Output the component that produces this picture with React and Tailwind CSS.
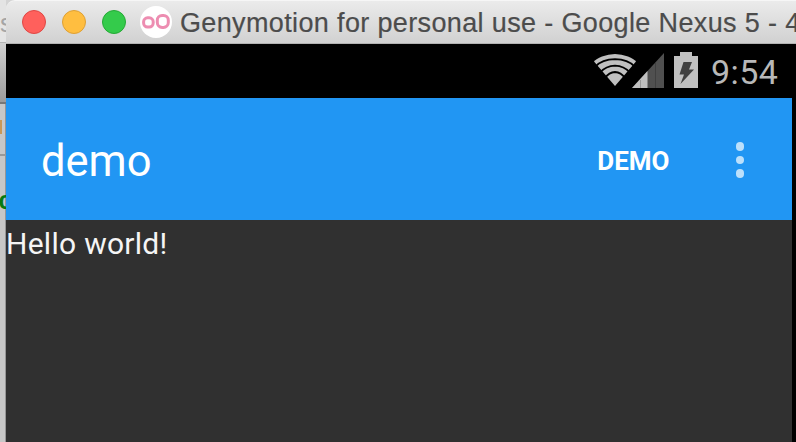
function BackgroundWindow() {
  return (
    <div className="flex w-[6px] shrink-0 flex-col overflow-hidden bg-[#c7c7c7] shadow-[inset_-1px_0_0_#969696]">
      <div className="h-[42px] shrink-0 bg-[#e4e4e4] pt-[10px] font-['Liberation_Sans',sans-serif] text-[26px] leading-[26px] text-[#a5a5a5]">
        <span className="block">s</span>
      </div>
      <div className="h-[60px] shrink-0 border-t border-[#b5b5b5] bg-linear-to-b from-[#d0d0d0] to-[#9b9b9b]" />
      <div className="h-[2px] shrink-0 bg-[#777777]" />
      <div className="h-[50px] shrink-0 pt-4">
        <div className="h-[14px] w-[2px] bg-[#c89858]" />
      </div>
      <div className="h-[2px] shrink-0 bg-[#999999]" />
      <div className="pt-[34px] font-['Liberation_Mono',monospace] text-[25px] leading-[26px] font-bold text-[#087a12]">
        <span className="-ml-[2px] block">c</span>
      </div>
    </div>
  );
}

function TitleBar() {
  return (
    <div className="flex h-[44px] shrink-0 items-center overflow-hidden rounded-tl-[9px] border-t border-b border-t-[#f6f6f6] border-b-[#b3b3b3] bg-linear-to-b from-[#ebebeb] to-[#d1d1d1] pl-4">
      <div className="flex shrink-0 gap-4">
        <div className="size-6 rounded-full border border-[#df4744] bg-[#ff605c]" />
        <div className="size-6 rounded-full border border-[#dea035] bg-[#ffbe40]" />
        <div className="size-6 rounded-full border border-[#25a936] bg-[#34cb4b]" />
      </div>
      <svg className="ml-[14px] size-8 shrink-0" viewBox="0 0 32 32" fill="none">
        <circle cx="16" cy="16" r="16" fill="#fff" />
        <rect x="3.6" y="11.8" width="9.6" height="9.3" rx="4" stroke="#ed8db1" strokeWidth="3" />
        <rect x="17.3" y="9.4" width="11" height="12" rx="4.8" stroke="#ed8db1" strokeWidth="3" />
      </svg>
      <span className="ml-[8px] pt-[2px] font-['Liberation_Sans',Arial,sans-serif] text-[27px] leading-[30px] tracking-[0.36px] whitespace-nowrap text-[#4c4c4c] [-webkit-text-stroke:0.2px_#4c4c4c]">
        Genymotion for personal use - Google Nexus 5 - 4
      </span>
    </div>
  );
}

function StatusBar() {
  return (
    <div className="flex h-[54px] shrink-0 bg-black pl-[588px]">
      <svg className="mt-[8px] h-[38px] w-[106px] shrink-0" viewBox="594 52 106 38">
        <path d="M594 61.5Q596 59 602 56.5Q615 51.5 628 56.5Q634 59 636 61.5L615 86Z" fill="#c0c0c0" />
        <g fill="none" stroke="#000" strokeWidth="1.8">
          <path d="M595.5 66.5Q602 59.5 615 59.2Q628 59.5 634.5 66.5" />
          <path d="M600 72.5Q606 65.8 615 65.6Q624 65.8 630 72.5" />
          <path d="M605 78Q609 72.2 615 72Q621 72.2 625 78" />
        </g>
        <path d="M632 88L664 53V88Z" fill="#505050" />
        <path d="M632 88L647.5 71V88Z" fill="#c0c0c0" />
        <path d="M640.5 80V88" stroke="#999" />
        <path d="M655.5 63V88" stroke="#404040" />
        <path d="M674 56h6v-4h12v4h6v32h-24z" fill="#c0c0c0" />
        <path d="M683.5 62h8.5l-3 7.5h5l-13.5 14.5 3.5-9.5h-4.5z" fill="#404040" />
      </svg>
      <span className="ml-[11px] pt-[8px] font-['Roboto',sans-serif] text-[34px] leading-[40px] font-normal tracking-[0.4px] text-[#b8b8b8]">
        9:54
      </span>
    </div>
  );
}

function AppBar() {
  return (
    <div className="flex h-[122px] shrink-0 items-center bg-[#2196f3] font-['Roboto',sans-serif] text-white">
      <h1 className="ml-[35px] flex-1 pt-[5px] text-[43.5px] leading-[50px] font-normal">demo</h1>
      <button className="mr-[66px] pt-[3px] text-[26px] leading-[30px] font-bold">DEMO</button>
      <button className="mr-[48px] flex flex-col gap-[5px] pt-[2px]" aria-label="More options">
        <span className="size-[8.5px] rounded-full bg-[#bce0fb]" />
        <span className="size-[8.5px] rounded-full bg-[#bce0fb]" />
        <span className="size-[8.5px] rounded-full bg-[#bce0fb]" />
      </button>
    </div>
  );
}

export default function App() {
  return (
    <div className="flex h-[442px] w-[796px] overflow-hidden bg-[#d4d4d4]">
      <BackgroundWindow />
      <div className="flex w-[790px] shrink-0 flex-col">
        <TitleBar />
        <StatusBar />
        <div className="flex min-h-0 flex-1 flex-col border-r-4 border-black bg-[#303030]">
          <AppBar />
          <main className="pt-[6px] font-['Roboto',sans-serif] text-[30px] leading-[36px] tracking-[0.28px] text-[#f5f5f5]">
            Hello world!
          </main>
        </div>
      </div>
    </div>
  );
}
